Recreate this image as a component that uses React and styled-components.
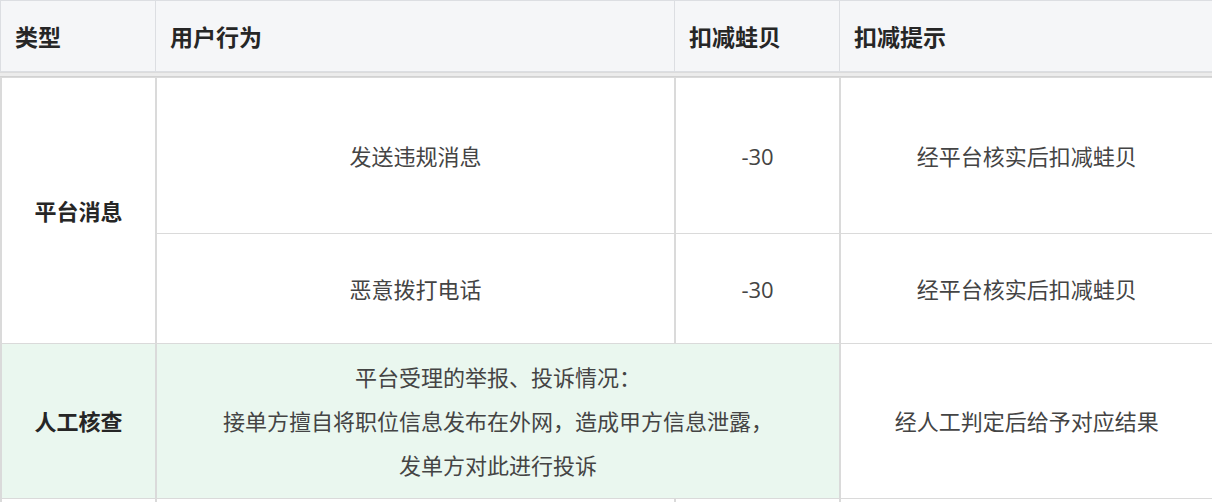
import React from 'react'
import styled, { createGlobalStyle } from 'styled-components'

const Global = createGlobalStyle`
  body {
    margin: 0;
    background: #fff;
    font-family: "Open Sans", "Noto Sans CJK SC", sans-serif;
  }
`

const Wrap = styled.div`
  width: 1212px;
`

const Table = styled.table`
  width: 1212px;
  border-collapse: collapse;
  table-layout: fixed;
`

const Head = styled.th`
  height: 70px;
  padding: 0 14px;
  text-align: left;
  font-size: 23px;
  font-weight: 700;
  color: #262626;
  background: #f5f6f8;
  border: 1px solid #dcdee2;
`

const Divider = styled.div`
  height: 3px;
  background: #ececec;
  border-top: 1px solid #dcdcdc;
  border-bottom: 1px solid #d2d2d2;
`

const Cell = styled.td`
  height: ${p => p.h}px;
  padding: 10px 16px;
  text-align: center;
  vertical-align: middle;
  font-size: 22px;
  line-height: 44px;
  font-weight: ${p => (p.bold ? 700 : 400)};
  color: ${p => (p.bold ? '#262626' : '#444')};
  background: ${p => (p.green ? '#eaf7ef' : '#fff')};
  border: 1px solid #dadada;
  border-left-width: 2px;
  box-sizing: border-box;
`

const cols = [155, 519, 165, 373]

function Cols() {
  return (
    <colgroup>
      {cols.map((w, i) => <col key={i} style={{ width: w }} />)}
    </colgroup>
  )
}

export default function App() {
  return (
    <Wrap>
      <Global />
      <Table>
        <Cols />
        <thead>
          <tr>
            <Head>类型</Head>
            <Head>用户行为</Head>
            <Head>扣减蛙贝</Head>
            <Head>扣减提示</Head>
          </tr>
        </thead>
      </Table>
      <Divider />
      <Table>
        <Cols />
        <tbody>
          <tr>
            <Cell h={156} bold rowSpan={2}>平台消息</Cell>
            <Cell h={156}>发送违规消息</Cell>
            <Cell h={156}>-30</Cell>
            <Cell h={156}>经平台核实后扣减蛙贝</Cell>
          </tr>
          <tr>
            <Cell h={110}>恶意拨打电话</Cell>
            <Cell h={110}>-30</Cell>
            <Cell h={110}>经平台核实后扣减蛙贝</Cell>
          </tr>
          <tr>
            <Cell h={155} bold green>人工核查</Cell>
            <Cell h={155} green colSpan={2}>
              平台受理的举报、投诉情况：<br />
              接单方擅自将职位信息发布在外网，造成甲方信息泄露，<br />
              发单方对此进行投诉
            </Cell>
            <Cell h={155}>经人工判定后给予对应结果</Cell>
          </tr>
          <tr>
            <Cell h={110} />
            <Cell h={110} />
            <Cell h={110} />
            <Cell h={110} />
          </tr>
        </tbody>
      </Table>
    </Wrap>
  )
}
